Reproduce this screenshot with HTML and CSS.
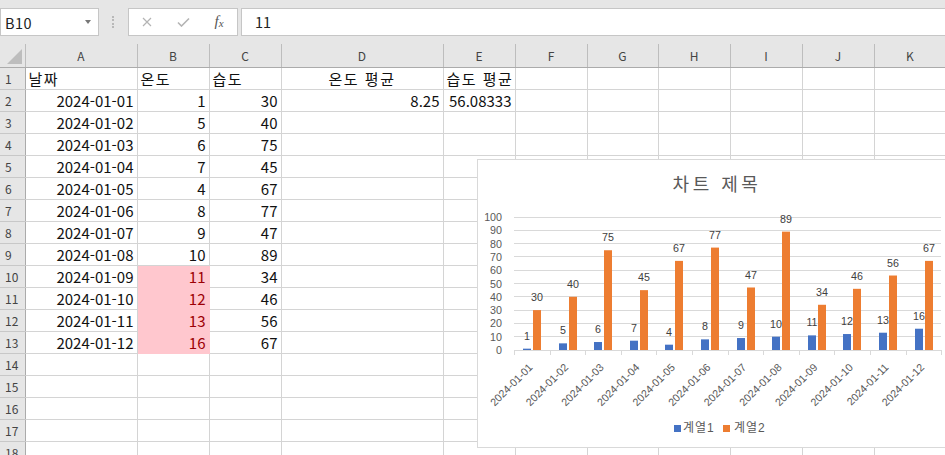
FILE: index.html
```html
<!DOCTYPE html>
<html lang="ko">
<head>
  <meta charset="UTF-8" />
  <title>통합 문서 - 차트</title>
  <link rel="stylesheet" href="styles.css">
</head>
<body>

  <!-- BARRA DELLA FORMULA -->
  <div class="formula-bar">
    <div class="name-box"><span>B10</span><span class="caret"></span></div>
    <div class="grip"></div>
    <div class="fx-buttons">
      <span class="fx-btn">
        <svg width="10" height="10" viewBox="0 0 10 10"><path d="M1 1 L9 9 M9 1 L1 9" stroke="#b4b4b4" stroke-width="1.2" fill="none"/></svg>
      </span>
      <span class="fx-btn">
        <svg width="13" height="10" viewBox="0 0 13 10"><path d="M1 5.5 L4.5 9 L12 1.5" stroke="#b4b4b4" stroke-width="1.6" fill="none"/></svg>
      </span>
      <span class="fx-btn fx-label"><i>f</i><i class="fx-x">x</i></span>
    </div>
    <div class="formula-input">11</div>
  </div>

  <!-- FOGLIO -->
  <div class="sheet-area">
    <table class="sheet">
      <colgroup>
        <col class="c-rh"><col class="c-a"><col class="c-b"><col class="c-c"><col class="c-d"><col class="c-e">
        <col class="c-f"><col class="c-g"><col class="c-h"><col class="c-i"><col class="c-j"><col class="c-k">
      </colgroup>
      <thead>
        <tr>
          <th class="corner"><span class="corner-mark"></span></th>
          <th>A</th><th>B</th><th>C</th><th>D</th><th>E</th><th>F</th><th>G</th><th>H</th><th>I</th><th>J</th><th>K</th>
        </tr>
      </thead>
      <tbody>
        <tr><th>1</th><td class="txt">날짜</td><td class="txt">온도</td><td class="txt">습도</td><td class="txt mid">온도 평균</td><td class="txt">습도 평균</td><td></td><td></td><td></td><td></td><td></td><td></td></tr>
        <tr><th>2</th><td class="num">2024-01-01</td><td class="num">1</td><td class="num">30</td><td class="num">8.25</td><td class="num">56.08333</td><td></td><td></td><td></td><td></td><td></td><td></td></tr>
        <tr><th>3</th><td class="num">2024-01-02</td><td class="num">5</td><td class="num">40</td><td></td><td></td><td></td><td></td><td></td><td></td><td></td><td></td></tr>
        <tr><th>4</th><td class="num">2024-01-03</td><td class="num">6</td><td class="num">75</td><td></td><td></td><td></td><td></td><td></td><td></td><td></td><td></td></tr>
        <tr><th>5</th><td class="num">2024-01-04</td><td class="num">7</td><td class="num">45</td><td></td><td></td><td></td><td></td><td></td><td></td><td></td><td></td></tr>
        <tr><th>6</th><td class="num">2024-01-05</td><td class="num">4</td><td class="num">67</td><td></td><td></td><td></td><td></td><td></td><td></td><td></td><td></td></tr>
        <tr><th>7</th><td class="num">2024-01-06</td><td class="num">8</td><td class="num">77</td><td></td><td></td><td></td><td></td><td></td><td></td><td></td><td></td></tr>
        <tr><th>8</th><td class="num">2024-01-07</td><td class="num">9</td><td class="num">47</td><td></td><td></td><td></td><td></td><td></td><td></td><td></td><td></td></tr>
        <tr><th>9</th><td class="num">2024-01-08</td><td class="num">10</td><td class="num">89</td><td></td><td></td><td></td><td></td><td></td><td></td><td></td><td></td></tr>
        <tr><th>10</th><td class="num">2024-01-09</td><td class="num bad">11</td><td class="num">34</td><td></td><td></td><td></td><td></td><td></td><td></td><td></td><td></td></tr>
        <tr><th>11</th><td class="num">2024-01-10</td><td class="num bad">12</td><td class="num">46</td><td></td><td></td><td></td><td></td><td></td><td></td><td></td><td></td></tr>
        <tr><th>12</th><td class="num">2024-01-11</td><td class="num bad">13</td><td class="num">56</td><td></td><td></td><td></td><td></td><td></td><td></td><td></td><td></td></tr>
        <tr><th>13</th><td class="num">2024-01-12</td><td class="num bad">16</td><td class="num">67</td><td></td><td></td><td></td><td></td><td></td><td></td><td></td><td></td></tr>
        <tr><th>14</th><td></td><td></td><td></td><td></td><td></td><td></td><td></td><td></td><td></td><td></td><td></td></tr>
        <tr><th>15</th><td></td><td></td><td></td><td></td><td></td><td></td><td></td><td></td><td></td><td></td><td></td></tr>
        <tr><th>16</th><td></td><td></td><td></td><td></td><td></td><td></td><td></td><td></td><td></td><td></td><td></td></tr>
        <tr><th>17</th><td></td><td></td><td></td><td></td><td></td><td></td><td></td><td></td><td></td><td></td><td></td></tr>
        <tr><th>18</th><td></td><td></td><td></td><td></td><td></td><td></td><td></td><td></td><td></td><td></td><td></td></tr>
      </tbody>
    </table>

    <!-- GRAFICO (sopra il foglio) -->
    <div class="chart">
      <svg class="chart-svg" width="468" height="289" viewBox="0 0 468 289">
        <rect class="frame" x="0.5" y="0.5" width="500" height="288"/>
        <text class="chart-title" x="240" y="32">차트 제목</text>

        <g class="grid">
          <line x1="37" x2="464" y1="58" y2="58"/>
          <line x1="37" x2="464" y1="71.3" y2="71.3"/>
          <line x1="37" x2="464" y1="84.6" y2="84.6"/>
          <line x1="37" x2="464" y1="97.9" y2="97.9"/>
          <line x1="37" x2="464" y1="111.2" y2="111.2"/>
          <line x1="37" x2="464" y1="124.5" y2="124.5"/>
          <line x1="37" x2="464" y1="137.8" y2="137.8"/>
          <line x1="37" x2="464" y1="151.1" y2="151.1"/>
          <line x1="37" x2="464" y1="164.4" y2="164.4"/>
          <line x1="37" x2="464" y1="177.7" y2="177.7"/>
          <line x1="37" x2="464" y1="191" y2="191"/>
          <line x1="37" x2="37" y1="191" y2="196"/>
          <line x1="73" x2="73" y1="191" y2="196"/>
          <line x1="108" x2="108" y1="191" y2="196"/>
          <line x1="144" x2="144" y1="191" y2="196"/>
          <line x1="179" x2="179" y1="191" y2="196"/>
          <line x1="215" x2="215" y1="191" y2="196"/>
          <line x1="251" x2="251" y1="191" y2="196"/>
          <line x1="286" x2="286" y1="191" y2="196"/>
          <line x1="322" x2="322" y1="191" y2="196"/>
          <line x1="357" x2="357" y1="191" y2="196"/>
          <line x1="393" x2="393" y1="191" y2="196"/>
          <line x1="429" x2="429" y1="191" y2="196"/>
          <line x1="464" x2="464" y1="191" y2="196"/>
        </g>

        <g class="y-labels">
          <text x="25" y="62">100</text>
          <text x="25" y="75.3">90</text>
          <text x="25" y="88.6">80</text>
          <text x="25" y="101.9">70</text>
          <text x="25" y="115.2">60</text>
          <text x="25" y="128.5">50</text>
          <text x="25" y="141.8">40</text>
          <text x="25" y="155.1">30</text>
          <text x="25" y="168.4">20</text>
          <text x="25" y="181.7">10</text>
          <text x="25" y="195">0</text>
        </g>

        <g class="bars-1">
          <rect x="46" y="189.67" width="8" height="1.33"/>
          <rect x="82" y="184.35" width="8" height="6.65"/>
          <rect x="117" y="183.02" width="8" height="7.98"/>
          <rect x="153" y="181.69" width="8" height="9.31"/>
          <rect x="188" y="185.68" width="8" height="5.32"/>
          <rect x="224" y="180.36" width="8" height="10.64"/>
          <rect x="260" y="179.03" width="8" height="11.97"/>
          <rect x="295" y="177.7" width="8" height="13.3"/>
          <rect x="331" y="176.37" width="8" height="14.63"/>
          <rect x="366" y="175.04" width="8" height="15.96"/>
          <rect x="402" y="173.71" width="8" height="17.29"/>
          <rect x="438" y="169.72" width="8" height="21.28"/>
        </g>
        <g class="bars-2">
          <rect x="56" y="151.1" width="8" height="39.9"/>
          <rect x="92" y="137.8" width="8" height="53.2"/>
          <rect x="127" y="91.25" width="8" height="99.75"/>
          <rect x="163" y="131.15" width="8" height="59.85"/>
          <rect x="198" y="101.89" width="8" height="89.11"/>
          <rect x="234" y="88.59" width="8" height="102.41"/>
          <rect x="270" y="128.49" width="8" height="62.51"/>
          <rect x="305" y="72.63" width="8" height="118.37"/>
          <rect x="341" y="145.78" width="8" height="45.22"/>
          <rect x="376" y="129.82" width="8" height="61.18"/>
          <rect x="412" y="116.52" width="8" height="74.48"/>
          <rect x="448" y="101.89" width="8" height="89.11"/>
        </g>

        <g class="values">
          <text x="50" y="180.7">1</text>
          <text x="86" y="175.4">5</text>
          <text x="121" y="174">6</text>
          <text x="157" y="172.7">7</text>
          <text x="192" y="176.7">4</text>
          <text x="228" y="171.4">8</text>
          <text x="264" y="170">9</text>
          <text x="299" y="168.7">10</text>
          <text x="335" y="167.4">11</text>
          <text x="370" y="166">12</text>
          <text x="406" y="164.7">13</text>
          <text x="442" y="160.7">16</text>
          <text x="60" y="142.1">30</text>
          <text x="96" y="128.8">40</text>
          <text x="131" y="82.3">75</text>
          <text x="167" y="122.2">45</text>
          <text x="202" y="92.9">67</text>
          <text x="238" y="79.6">77</text>
          <text x="274" y="119.5">47</text>
          <text x="309" y="63.6">89</text>
          <text x="345" y="136.8">34</text>
          <text x="380" y="120.8">46</text>
          <text x="416" y="107.5">56</text>
          <text x="452" y="92.9">67</text>
        </g>

        <g class="x-labels">
          <text transform="translate(56.3 209) rotate(-45)">2024-01-01</text>
          <text transform="translate(91.9 209) rotate(-45)">2024-01-02</text>
          <text transform="translate(127.5 209) rotate(-45)">2024-01-03</text>
          <text transform="translate(163.1 209) rotate(-45)">2024-01-04</text>
          <text transform="translate(198.7 209) rotate(-45)">2024-01-05</text>
          <text transform="translate(234.3 209) rotate(-45)">2024-01-06</text>
          <text transform="translate(269.9 209) rotate(-45)">2024-01-07</text>
          <text transform="translate(305.5 209) rotate(-45)">2024-01-08</text>
          <text transform="translate(341.1 209) rotate(-45)">2024-01-09</text>
          <text transform="translate(376.7 209) rotate(-45)">2024-01-10</text>
          <text transform="translate(412.3 209) rotate(-45)">2024-01-11</text>
          <text transform="translate(447.9 209) rotate(-45)">2024-01-12</text>
        </g>

        <g class="legend">
          <rect class="key-1" x="197" y="266" width="7" height="7"/>
          <text x="206" y="273">계열1</text>
          <rect class="key-2" x="246" y="266" width="7" height="7"/>
          <text x="257" y="273">계열2</text>
        </g>
      </svg>
    </div>
  </div>

</body>
</html>
```

FILE: styles.css
```css
/* Reset e font base */
* {
  margin: 0;
  padding: 0;
  box-sizing: border-box;
}
body {
  width: 945px;
  height: 455px;
  overflow: hidden;
  background-color: #fff;
  font-family: "Noto Sans CJK KR", sans-serif;
  color: #000;
}

/* Barra della formula */
.formula-bar {
  display: flex;
  align-items: flex-start;
  height: 44px;
  padding-top: 8px;
  background-color: #e6e6e6;
}
.name-box {
  display: flex;
  align-items: center;
  justify-content: space-between;
  width: 99px;
  height: 28px;
  padding: 0 7px 0 4px;
  background-color: #fff;
  border: 1px solid #c6c6c6;
  font-size: 14.5px;
  letter-spacing: 0.5px;
  color: #222;
}
.caret {
  width: 0;
  height: 0;
  border-left: 3px solid transparent;
  border-right: 3px solid transparent;
  border-top: 4px solid #777;
}
.grip {
  width: 2px;
  height: 12px;
  margin: 8px 14px 0 13px;
  border-left: 2px dotted #b8b8b8;
}
.fx-buttons {
  display: flex;
  width: 110px;
  height: 28px;
  background-color: #fff;
  border: 1px solid #c6c6c6;
}
.fx-btn {
  display: flex;
  align-items: center;
  justify-content: center;
  width: 36px;
}
.fx-label {
  font-family: "Liberation Serif", serif;
  font-size: 15px;
  color: #555;
  padding-bottom: 2px;
}
.fx-x {
  font-size: 11px;
  margin-top: 3px;
}
.formula-input {
  flex: 1;
  height: 28px;
  margin-left: 3px;
  padding-left: 13px;
  background-color: #fff;
  border: 1px solid #c6c6c6;
  border-right: none;
  font-size: 14.5px;
  line-height: 26px;
  color: #222;
}

/* Foglio */
.sheet-area {
  position: relative;
}
.sheet {
  table-layout: fixed;
  border-collapse: collapse;
  width: 946px;
  font-size: 15px;
}
.c-rh { width: 25px; }
.c-a { width: 112px; }
.c-b, .c-c, .c-e, .c-f, .c-h, .c-i, .c-j, .c-k { width: 72px; }
.c-g { width: 71px; }
.c-d { width: 162px; }

.sheet th {
  height: 23px;
  font-size: 12px;
  font-weight: normal;
  color: #444;
  background-color: #e6e6e6;
  border-right: 1px solid #bdbdbd;
  border-bottom: 1px solid #ababab;
}
.sheet tbody th {
  height: 22px;
  text-align: left;
  padding-left: 5px;
  border-bottom: 1px solid #c8c8c8;
  border-right: 1px solid #ababab;
}
.sheet td {
  height: 22px;
  padding: 0 3px;
  white-space: nowrap;
  overflow: hidden;
  color: #111;
  border-right: 1px solid #d4d4d4;
  border-bottom: 1px solid #d4d4d4;
}
.sheet td.txt {
  letter-spacing: 1.5px;
}
.sheet td.num {
  text-align: right;
}
.sheet td.mid {
  text-align: center;
}
.sheet td.bad {
  background-color: #ffc7ce;
  border-bottom-color: #ffc7ce;
  border-right-color: #ffc7ce;
  color: #9c0006;
}
.corner {
  position: relative;
}
.corner-mark {
  position: absolute;
  right: 3px;
  bottom: 3px;
  width: 0;
  height: 0;
  border-left: 15px solid transparent;
  border-bottom: 15px solid #bdbdbd;
}

/* Grafico */
.chart {
  position: absolute;
  left: 477px;
  top: 115px;
  width: 468px;
  height: 289px;
  background-color: #fff;
}
.chart-svg {
  display: block;
  font-family: "Liberation Sans", "Noto Sans CJK KR", sans-serif;
  font-size: 10.7px;
}
.chart-svg .frame {
  fill: #fff;
  stroke: #d9d9d9;
}
.chart-title {
  font-family: "Noto Sans CJK KR", sans-serif;
  font-size: 18px;
  letter-spacing: 3.5px;
  text-anchor: middle;
  fill: #595959;
}
.grid {
  stroke: #d9d9d9;
  stroke-width: 1;
  shape-rendering: crispEdges;
}
.y-labels text {
  text-anchor: end;
  fill: #595959;
}
.bars-1 rect, .key-1 { fill: #4472c4; }
.bars-2 rect, .key-2 { fill: #ed7d31; }
.values text {
  text-anchor: middle;
  fill: #404040;
}
.x-labels text {
  text-anchor: end;
  fill: #595959;
}
.legend text {
  font-size: 12px;
  letter-spacing: 1px;
  fill: #595959;
}
```
